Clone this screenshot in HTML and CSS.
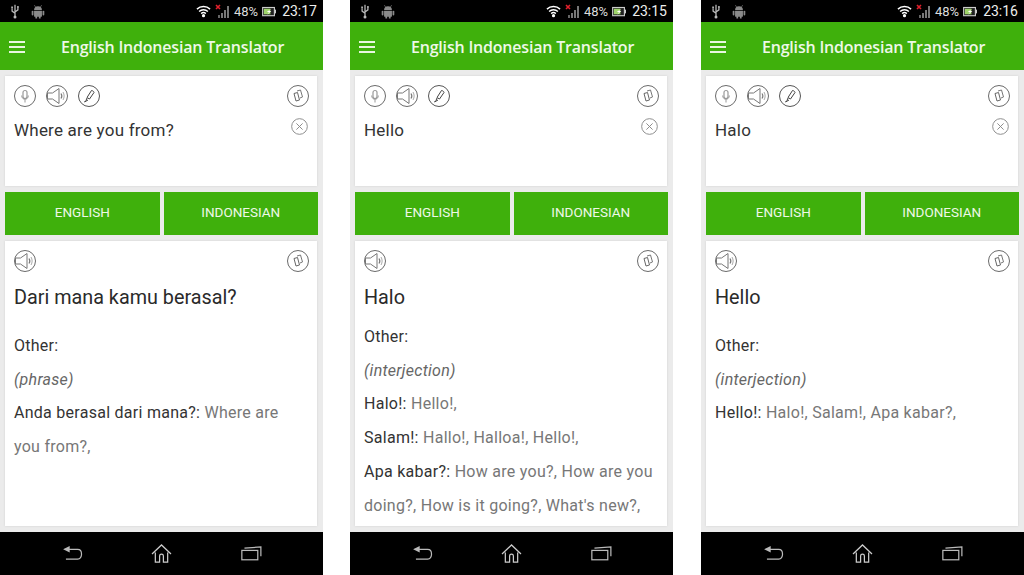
FILE: index.html
```html
<!DOCTYPE html>
<html lang="en">
<head>
<meta charset="utf-8">
<title>English Indonesian Translator</title>
<link rel="stylesheet" href="styles.css">
</head>
<body>
<svg class="defs" width="0" height="0" aria-hidden="true">
  <symbol id="i-usb" viewBox="0 0 14 18"><path d="M7 1v15M3.500 5v3.500L7 11M10.500 4v3L7 9.500" fill="none" stroke="#bbb" stroke-width="1.500"/><circle cx="7" cy="15.500" r="1.800" fill="#bbb"/><rect x="2.500" y="3" width="2" height="2" fill="#bbb"/><rect x="9.500" y="2.500" width="2" height="2" fill="#bbb"/></symbol>
  <symbol id="i-android" viewBox="0 0 16 16"><path d="M3.500 6.500a4.500 4.500 0 0 1 9 0zM3.500 7.300h9v5.700a1 1 0 0 1-1 1h-7a1 1 0 0 1-1-1z" fill="#8a8a8a"/><rect x="0.800" y="7" width="2" height="5.500" rx="1" fill="#8a8a8a"/><rect x="13.200" y="7" width="2" height="5.500" rx="1" fill="#8a8a8a"/><rect x="5" y="13" width="2" height="3" fill="#8a8a8a"/><rect x="9" y="13" width="2" height="3" fill="#8a8a8a"/><path d="M5 2.500L4 1M11 2.500L12 1" stroke="#8a8a8a"/></symbol>
  <symbol id="i-wifi" viewBox="0 0 16 14"><path d="M1 5a10 10 0 0 1 14 0M3.300 7.500a6.800 6.800 0 0 1 9.400 0M5.500 9.800a3.600 3.600 0 0 1 5 0" fill="none" stroke="#fff" stroke-width="1.500"/><circle cx="8" cy="12" r="1.700" fill="#fff"/></symbol>
  <symbol id="i-signal" viewBox="0 0 16 16"><path d="M1 2l4 4M5 2L1 6" stroke="#e0202c" stroke-width="1.600"/><rect x="3" y="12" width="2" height="3" fill="#666"/><rect x="6" y="10" width="2" height="5" fill="#777"/><rect x="9" y="7" width="2" height="8" fill="#777"/><rect x="12" y="3" width="2" height="12" fill="#777"/></symbol>
  <symbol id="i-battery" viewBox="0 0 15 11"><rect x="0.700" y="1.200" width="12.600" height="8.800" fill="#222" stroke="#ccc" stroke-width="1.200"/><rect x="13.500" y="3.500" width="1.500" height="4" fill="#ccc"/><rect x="2" y="2.500" width="7" height="6" fill="#9fd46a"/><path d="M10 2.500L5 6h2.500L5.500 9 10 5H7.500z" fill="#fff"/></symbol>
  <symbol id="i-mic" viewBox="0 0 22 22"><circle cx="11" cy="11" r="10.500" fill="none" stroke="#6a6a6a"/><rect x="9" y="5.500" width="4" height="8" rx="2" fill="none" stroke="#999" stroke-width="1.200"/><path d="M7.700 10.500c0 5 6.600 5 6.600 0M11 14.500v3" fill="none" stroke="#999"/></symbol>
  <symbol id="i-speaker" viewBox="0 0 22 22"><circle cx="11" cy="11" r="10.500" fill="none" stroke="#6a6a6a"/><path d="M1.500 8h5l6.500-4.500v15L6.500 14h-5z" fill="none" stroke="#777"/><path d="M15 8.500c1 1.500 1 3.500 0 5" fill="none" stroke="#777" stroke-width="1.200"/><path d="M17 7c1.500 2.500 1.500 5.500 0 8" fill="none" stroke="#aaa"/></symbol>
  <symbol id="i-pen" viewBox="0 0 22 22"><circle cx="11" cy="11" r="10.500" fill="none" stroke="#555"/><path d="M13.500 5.500c1 0 2.500 1 2.500 2l-4.500 6.500-2.500-1.500z" fill="none" stroke="#444"/><path d="M9 13l-1 2.500-1.500 1.500 3.500-2" fill="none" stroke="#444"/></symbol>
  <symbol id="i-copy" viewBox="0 0 22 22"><circle cx="11" cy="11" r="10.500" fill="none" stroke="#6a6a6a"/><path d="M7 8.500l3.500-1 2 7.500-3.500 1z" fill="none" stroke="#666"/><path d="M10 6l3.500-1 2 7-2.500 1" fill="none" stroke="#777"/></symbol>
  <symbol id="i-close" viewBox="0 0 18 18"><circle cx="9" cy="9" r="8.300" fill="none" stroke="#888"/><path d="M5.700 5.700l6.600 6.600M12.300 5.700l-6.600 6.600" stroke="#888"/></symbol>
  <symbol id="i-back" viewBox="0 0 22 16"><path d="M1 3.500L8 0v7z" fill="#bbb"/><path d="M7 3.700h9.500c5.500 0 5.500 10.300 0 10.300H4" fill="none" stroke="#bbb" stroke-width="1.300"/></symbol>
  <symbol id="i-home" viewBox="0 0 22 20"><path d="M1 10.500L11 1l10 9.500M4.500 9v10h4.500v-6.500c0-2.500 4-2.500 4 0V19h4.500V9" fill="none" stroke="#ccc" stroke-width="1.300"/></symbol>
  <symbol id="i-recent" viewBox="0 0 22 16"><rect x="0.700" y="4.700" width="17" height="10" fill="none" stroke="#bbb" stroke-width="1.300"/><path d="M3.500 2.300L21 1v10" fill="none" stroke="#bbb" stroke-width="1.300"/></symbol>
</svg>

<main class="gallery">

  <section class="phone">
    <div class="status">
      <div class="status-left"><svg class="ic-usb"><use href="#i-usb"/></svg><svg class="ic-android"><use href="#i-android"/></svg></div>
      <div class="status-right"><svg class="ic-wifi"><use href="#i-wifi"/></svg><svg class="ic-signal"><use href="#i-signal"/></svg><span class="pct">48%</span><svg class="ic-battery"><use href="#i-battery"/></svg><span class="clock">23:17</span></div>
    </div>
    <header class="appbar"><span class="burger"><i></i><i></i><i></i></span><h1 class="title">English Indonesian Translator</h1></header>
    <div class="content">
      <div class="card input-card">
        <div class="tools"><svg class="ic"><use href="#i-mic"/></svg><svg class="ic"><use href="#i-speaker"/></svg><svg class="ic"><use href="#i-pen"/></svg><svg class="ic push"><use href="#i-copy"/></svg></div>
        <div class="input-row"><p class="source">Where are you from?</p><svg class="ic-close"><use href="#i-close"/></svg></div>
      </div>
      <div class="langs"><div class="lang">ENGLISH</div><div class="lang">INDONESIAN</div></div>
      <div class="card output-card">
        <div class="tools"><svg class="ic"><use href="#i-speaker"/></svg><svg class="ic push"><use href="#i-copy"/></svg></div>
        <p class="result">Dari mana kamu berasal?</p>
        <div class="details tall">
          <p>Other:</p>
          <p class="pos">(phrase)</p>
          <p>Anda berasal dari mana?: <span class="syn">Where are you from?,</span></p>
        </div>
      </div>
    </div>
    <nav class="navbar"><svg class="ic-back"><use href="#i-back"/></svg><svg class="ic-home"><use href="#i-home"/></svg><svg class="ic-recent"><use href="#i-recent"/></svg></nav>
  </section>

  <section class="phone">
    <div class="status">
      <div class="status-left"><svg class="ic-usb"><use href="#i-usb"/></svg><svg class="ic-android"><use href="#i-android"/></svg></div>
      <div class="status-right"><svg class="ic-wifi"><use href="#i-wifi"/></svg><svg class="ic-signal"><use href="#i-signal"/></svg><span class="pct">48%</span><svg class="ic-battery"><use href="#i-battery"/></svg><span class="clock">23:15</span></div>
    </div>
    <header class="appbar"><span class="burger"><i></i><i></i><i></i></span><h1 class="title">English Indonesian Translator</h1></header>
    <div class="content">
      <div class="card input-card">
        <div class="tools"><svg class="ic"><use href="#i-mic"/></svg><svg class="ic"><use href="#i-speaker"/></svg><svg class="ic"><use href="#i-pen"/></svg><svg class="ic push"><use href="#i-copy"/></svg></div>
        <div class="input-row"><p class="source">Hello</p><svg class="ic-close"><use href="#i-close"/></svg></div>
      </div>
      <div class="langs"><div class="lang">ENGLISH</div><div class="lang">INDONESIAN</div></div>
      <div class="card output-card">
        <div class="tools"><svg class="ic"><use href="#i-speaker"/></svg><svg class="ic push"><use href="#i-copy"/></svg></div>
        <p class="result">Halo</p>
        <div class="details">
          <p>Other:</p>
          <p class="pos">(interjection)</p>
          <p>Halo!: <span class="syn">Hello!,</span></p>
          <p>Salam!: <span class="syn">Hallo!, Halloa!, Hello!,</span></p>
          <p>Apa kabar?: <span class="syn">How are you?, How are you doing?, How is it going?, What's new?,</span></p>
        </div>
      </div>
    </div>
    <nav class="navbar"><svg class="ic-back"><use href="#i-back"/></svg><svg class="ic-home"><use href="#i-home"/></svg><svg class="ic-recent"><use href="#i-recent"/></svg></nav>
  </section>

  <section class="phone">
    <div class="status">
      <div class="status-left"><svg class="ic-usb"><use href="#i-usb"/></svg><svg class="ic-android"><use href="#i-android"/></svg></div>
      <div class="status-right"><svg class="ic-wifi"><use href="#i-wifi"/></svg><svg class="ic-signal"><use href="#i-signal"/></svg><span class="pct">48%</span><svg class="ic-battery"><use href="#i-battery"/></svg><span class="clock">23:16</span></div>
    </div>
    <header class="appbar"><span class="burger"><i></i><i></i><i></i></span><h1 class="title">English Indonesian Translator</h1></header>
    <div class="content">
      <div class="card input-card">
        <div class="tools"><svg class="ic"><use href="#i-mic"/></svg><svg class="ic"><use href="#i-speaker"/></svg><svg class="ic"><use href="#i-pen"/></svg><svg class="ic push"><use href="#i-copy"/></svg></div>
        <div class="input-row"><p class="source">Halo</p><svg class="ic-close"><use href="#i-close"/></svg></div>
      </div>
      <div class="langs"><div class="lang">ENGLISH</div><div class="lang">INDONESIAN</div></div>
      <div class="card output-card">
        <div class="tools"><svg class="ic"><use href="#i-speaker"/></svg><svg class="ic push"><use href="#i-copy"/></svg></div>
        <p class="result">Hello</p>
        <div class="details tall">
          <p>Other:</p>
          <p class="pos">(interjection)</p>
          <p>Hello!: <span class="syn">Halo!, Salam!, Apa kabar?,</span></p>
        </div>
      </div>
    </div>
    <nav class="navbar"><svg class="ic-back"><use href="#i-back"/></svg><svg class="ic-home"><use href="#i-home"/></svg><svg class="ic-recent"><use href="#i-recent"/></svg></nav>
  </section>

</main>
</body>
</html>
```

FILE: styles.css
```css
* { box-sizing: border-box; }
html, body { margin: 0; padding: 0; background: #fff; }
.defs { display: block; height: 0; width: 0; }
svg { display: block; flex: none; }

.gallery {
  width: 1024px;
  height: 575px;
  display: flex;
  gap: 27px;
  overflow: hidden;
}
.phone {
  width: 323px;
  height: 575px;
  display: flex;
  flex-direction: column;
  flex: none;
  background: #ebebeb;
  font-family: Roboto, "Liberation Sans", sans-serif;
}
.phone:last-child { margin-left: 1px; }

.status {
  height: 22px;
  background: #000;
  display: flex;
  align-items: center;
  justify-content: space-between;
  padding: 0 6px 0 9px;
  flex: none;
}
.status-left, .status-right { display: flex; align-items: center; }
.ic-usb { width: 12px; height: 15px; }
.ic-android { width: 14px; height: 15px; margin-left: 10px; }
.ic-wifi { width: 15px; height: 14px; }
.ic-signal { width: 16px; height: 16px; margin-left: 4px; }
.pct { color: #ddd; font-size: 13px; margin-left: 3px; }
.ic-battery { width: 14px; height: 11px; margin-left: 4px; }
.clock { color: #eee; font-size: 14px; margin-left: 6px; }

.appbar {
  height: 48px;
  background: #3fb00c;
  display: flex;
  align-items: center;
  padding: 1px 0 0 9px;
  flex: none;
}
.burger { display: flex; flex-direction: column; gap: 3px; width: 16px; }
.burger i { display: block; height: 2px; background: #e8f6e0; }
.title {
  margin: 0 0 0 36px;
  font: 600 16px/1 "Open Sans", sans-serif;
  letter-spacing: -0.200px;
  color: #eef8e8;
}

.content {
  flex: 1;
  min-height: 0;
  padding: 6px 5px 6px 5px;
  display: flex;
  flex-direction: column;
  gap: 6px;
}
.card {
  background: #fff;
  box-shadow: 0 0 2px #cfcfcf;
  margin-right: 1px;
  padding: 9px 8px 0 9px;
  overflow: hidden;
}
.input-card { height: 110px; flex: none; }
.output-card { flex: 1; min-height: 0; }
.tools { display: flex; gap: 10px; height: 22px; }
.ic { width: 22px; height: 22px; }
.push { margin-left: auto; }

.input-row { display: flex; justify-content: space-between; margin-top: 11px; }
.source { margin: 1px 0 0; font-size: 17px; line-height: 22px; letter-spacing: 0.220px; color: #333; }
.ic-close { width: 17px; height: 17px; margin-right: 1px; }

.langs { display: flex; gap: 4px; height: 43px; flex: none; }
.lang {
  flex: 1;
  background: #3fb00c;
  color: #eef8e8;
  font-size: 13.500px;
  padding-bottom: 4px;
  display: flex;
  align-items: center;
  justify-content: center;
}

.result { margin: 13px 0 0; font-size: 19.800px; line-height: 26px; color: #2a2a2a; }
.details { margin-top: 9px; font-size: 16px; line-height: 33.700px; letter-spacing: 0.270px; color: #333; }
.details.tall { margin-top: 18px; }
.details p { margin: 0; }
.pos { font-style: italic; color: #666; }
.syn { color: #777; }

.navbar {
  height: 43px;
  background: #000;
  flex: none;
  display: flex;
  align-items: center;
  padding: 0 0 0 62px;
}
.ic-back { width: 21px; height: 15px; }
.ic-home { width: 21px; height: 19px; margin-left: 68px; }
.ic-recent { width: 21px; height: 15px; margin-left: 69px; }
```
